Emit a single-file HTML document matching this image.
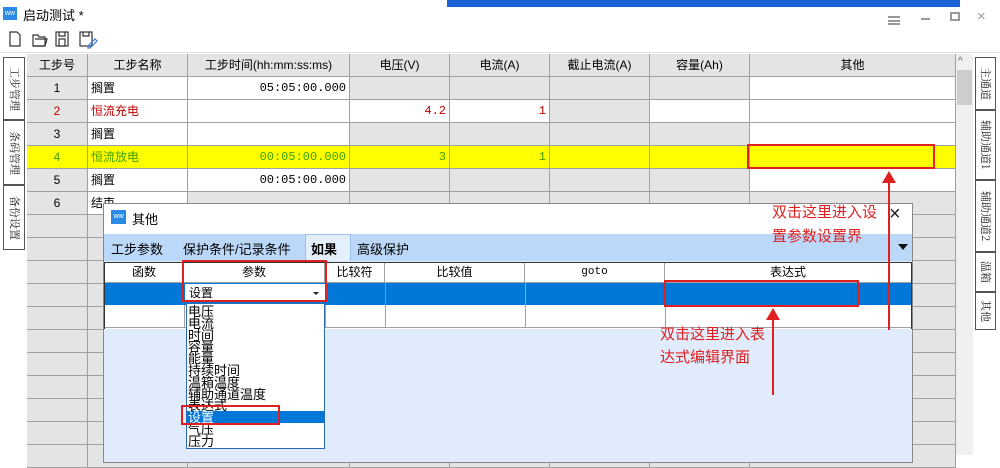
<!DOCTYPE html>
<html><head><meta charset="utf-8"><style>
*{margin:0;padding:0;box-sizing:border-box}
body{width:1000px;height:455px;overflow:hidden;background:#fff;position:relative;font-family:"Liberation Sans","Noto Sans CJK SC",sans-serif;font-size:12px;color:#000}
.a{position:absolute}
.c{position:absolute;border-right:1px solid #a0a0a0;border-bottom:1px solid #a0a0a0;height:23px;line-height:22px;padding:0 3px;white-space:nowrap;overflow:hidden}
.g{background:#e4e4e4}.w{background:#fff}.y{background:#ffff00}
.r{text-align:right;font-family:"Liberation Mono","Noto Sans CJK SC",monospace}
.m{text-align:center}
.vt{position:absolute;border:1px solid #555;background:#fff;writing-mode:vertical-rl;text-orientation:sideways;font-size:11px;text-align:center;color:#222;font-family:"Noto Serif CJK SC",serif;line-height:19px}
.red{color:#e02020;font-size:15px;position:absolute;white-space:nowrap}
.box{position:absolute;border:2px solid #e02020}
.dc{position:absolute;border-right:1px solid #a0a0a0;border-bottom:1px solid #a0a0a0;text-align:center;line-height:19px;height:20px}
</style></head><body>
<div class="a" style="left:447px;top:0;width:513px;height:7px;background:#1a62d8"></div>
<div class="a" style="left:3px;top:7px;width:14px;height:13px;background:#2a8ae8;color:#fff;font-size:7px;line-height:13px;text-align:center">ww</div>
<div class="a" style="left:23px;top:5px;font-size:13px">启动测试 *</div>
<svg class="a" style="left:0;top:28px" width="110" height="22" fill="none" stroke="#333" stroke-width="1.2">
<path d="M10 4h7l3 3v11H10z"/><path d="M33 7h5l1 2h6v9H33z"/><path d="M35 11h12l-2 7H33"/>
<rect x="56" y="4" width="12" height="14"/><rect x="59" y="11" width="6" height="7"/><path d="M59 4v4h6V4"/>
<rect x="80" y="4" width="12" height="14"/><path d="M83 4v4h6V4"/><path d="M88 18l7-7 2 2-7 7h-2z" stroke="#3a7ad8"/>
</svg>
<div class="a" style="left:888px;top:16px;width:12px;height:9px;border-top:2px solid #999;border-bottom:2px solid #999"></div>
<div class="a" style="left:888px;top:20px;width:12px;height:2px;background:#999"></div>
<div class="a" style="left:921px;top:18px;width:9px;height:2px;background:#999"></div>
<div class="a" style="left:950px;top:12px;width:10px;height:9px;border:2px solid #999"></div>
<div class="a" style="left:977px;top:8px;font-size:15px;color:#999">×</div>
<div class="a" style="left:0;top:52px;width:1000px;height:1px;background:#e0e0e0"></div>

<div class="vt" style="left:3px;top:57px;width:22px;height:63px">工步管理</div>
<div class="vt" style="left:3px;top:120px;width:22px;height:65px">条码管理</div>
<div class="vt" style="left:3px;top:185px;width:22px;height:65px">备份设置</div>

<div class="a" style="left:27px;top:54px;width:929px;height:401px;background:#e4e4e4;border-left:1px solid #a0a0a0"></div>
<div id="grid"></div>
<script>
(function(){
var cols=[27,88,188,350,450,550,650,750,956];
var hd=["工步号","工步名称","工步时间(hh:mm:ss:ms)","电压(V)","电流(A)","截止电流(A)","容量(Ah)","其他"];
var rows=[
["g1 w搁置 w05:05:00.000 g g g g w","#000"],
["g2 w恒流充电 w w4.2 w1 g w w","#c00000"],
["g3 w搁置 w g g g g w","#000"],
["y4 y恒流放电 y00:05:00.000 y3 y1 y y y","#40a000"],
["g5 w搁置 w00:05:00.000 g g g g w","#000"],
["g6 w结束 g g g g g g","#000"]];
var h="";
for(var i=0;i<8;i++){h+='<div class="c g m" style="left:'+cols[i]+'px;top:54px;width:'+(cols[i+1]-cols[i])+'px">'+hd[i]+'</div>';}
for(var r=0;r<17;r++){var ty=77+r*23;var cells=r<6?rows[r][0].split(" "):null;
for(var i=0;i<8;i++){var cls="g",t="";if(cells){cls=cells[i][0];t=cells[i].slice(1);}
var al=(i==0)?"m":(i==1?"":"r");var col=cells?rows[r][1]:"#000";
h+='<div class="c '+cls+' '+al+'" style="left:'+cols[i]+'px;top:'+ty+'px;width:'+(cols[i+1]-cols[i])+'px;color:'+col+'">'+t+'</div>';}}
document.getElementById("grid").innerHTML=h;
})();
</script>
<div class="a" style="left:956px;top:54px;width:17px;height:401px;background:#f0f0f0"></div>
<div class="a" style="left:958px;top:56px;font-size:10px;color:#555">^</div>
<div class="a" style="left:957px;top:70px;width:15px;height:35px;background:#cdcdcd"></div>
<div class="vt" style="left:975px;top:57px;width:21px;height:53px">主通道</div>
<div class="vt" style="left:975px;top:110px;width:21px;height:70px">辅助通道1</div>
<div class="vt" style="left:975px;top:180px;width:21px;height:72px">辅助通道2</div>
<div class="vt" style="left:975px;top:252px;width:21px;height:40px">温箱</div>
<div class="vt" style="left:975px;top:292px;width:21px;height:38px">其他</div>

<!-- dialog -->
<div class="a" style="left:103px;top:203px;width:810px;height:260px;background:#e0ecfc;border:1px solid #888"></div>
<div class="a" style="left:104px;top:204px;width:808px;height:30px;background:#fff"></div>
<div class="a" style="left:111px;top:210px;width:15px;height:14px;background:#2a8ae8;color:#fff;font-size:7px;line-height:14px;text-align:center">ww</div>
<div class="a" style="left:132px;top:209px;font-size:13px">其他</div>
<div class="a" style="left:889px;top:203px;font-size:20px;color:#222">×</div>
<div class="a" style="left:104px;top:234px;width:808px;height:27px;background:#bcd8f8"></div>
<div class="a" style="left:305px;top:234px;width:46px;height:27px;background:#e4effc;border:1px solid #9cc0ea;border-bottom:none"></div>
<div class="a" style="left:111px;top:239px;font-size:13px">工步参数</div>
<div class="a" style="left:183px;top:239px;font-size:13px">保护条件/记录条件</div>
<div class="a" style="left:311px;top:239px;font-size:13px;font-weight:bold">如果</div>
<div class="a" style="left:357px;top:239px;font-size:13px">高级保护</div>
<div class="a" style="left:898px;top:244px;width:0;height:0;border-left:5px solid transparent;border-right:5px solid transparent;border-top:6px solid #111"></div>
<div class="a" style="left:104px;top:262px;width:808px;height:67px;border:1px solid #333;border-bottom:none;background:#fff"></div>
<div class="a" style="left:105px;top:283px;width:806px;height:22px;background:#0078d7"></div>
<div class="dc" style="left:105px;top:263px;width:79px">函数</div>
<div class="dc" style="left:184px;top:263px;width:141px">参数</div>
<div class="dc" style="left:325px;top:263px;width:60px">比较符</div>
<div class="dc" style="left:385px;top:263px;width:140px">比较值</div>
<div class="dc" style="left:525px;top:263px;width:140px;font-family:'Liberation Mono',monospace;font-size:11px">goto</div>
<div class="dc" style="left:665px;top:263px;width:246px;border-right:none">表达式</div>
<div class="a" style="left:105px;top:305px;width:806px;height:23px;border-bottom:1px solid #a0a0a0"></div>
<div class="a" style="left:184px;top:305px;width:1px;height:23px;background:#a0a0a0"></div>
<div class="a" style="left:325px;top:305px;width:1px;height:23px;background:#a0a0a0"></div>
<div class="a" style="left:385px;top:305px;width:1px;height:23px;background:#a0a0a0"></div>
<div class="a" style="left:525px;top:283px;width:1px;height:45px;background:#a0a0a0"></div>
<div class="a" style="left:665px;top:305px;width:1px;height:23px;background:#a0a0a0"></div>
<div class="a" style="left:385px;top:283px;width:1px;height:22px;background:#6a9ad8"></div>
<div class="a" style="left:185px;top:284px;width:140px;height:18px;background:#fff;line-height:18px;padding-left:4px">设置</div>
<div class="a" style="left:313px;top:292px;border-left:3px solid transparent;border-right:3px solid transparent;border-top:3px solid #222"></div>
<div class="a" style="left:186px;top:303px;width:139px;height:146px;background:#fff;border:1px solid #2a6ab8"></div>
<div class="a" style="left:187px;top:411px;width:137px;height:12px;background:#0078d7"></div>
<div class="a" style="left:188px;top:306px;font-size:13px;line-height:11.8px">电压<br>电流<br>时间<br>容量<br>能量<br>持续时间<br>温箱温度<br>辅助通道温度<br>表达式<br><span style="color:#fff">设置</span><br>气压<br>压力</div>

<div class="box" style="left:182px;top:260px;width:145px;height:42px"></div>
<div class="box" style="left:181px;top:405px;width:99px;height:20px"></div>
<div class="box" style="left:664px;top:280px;width:195px;height:27px"></div>
<div class="box" style="left:747px;top:144px;width:188px;height:25px"></div>
<div class="a" style="left:888px;top:180px;width:2px;height:150px;background:#e02020"></div>
<div class="a" style="left:882px;top:171px;border-left:7px solid transparent;border-right:7px solid transparent;border-bottom:12px solid #e02020"></div>
<div class="a" style="left:772px;top:318px;width:2px;height:77px;background:#e02020"></div>
<div class="a" style="left:766px;top:308px;border-left:7px solid transparent;border-right:7px solid transparent;border-bottom:12px solid #e02020"></div>
<div class="red" style="left:772px;top:201px">双击这里进入设</div>
<div class="red" style="left:772px;top:225px">置参数设置界</div>
<div class="red" style="left:660px;top:323px">双击这里进入表</div>
<div class="red" style="left:660px;top:346px">达式编辑界面</div>
</body></html>
